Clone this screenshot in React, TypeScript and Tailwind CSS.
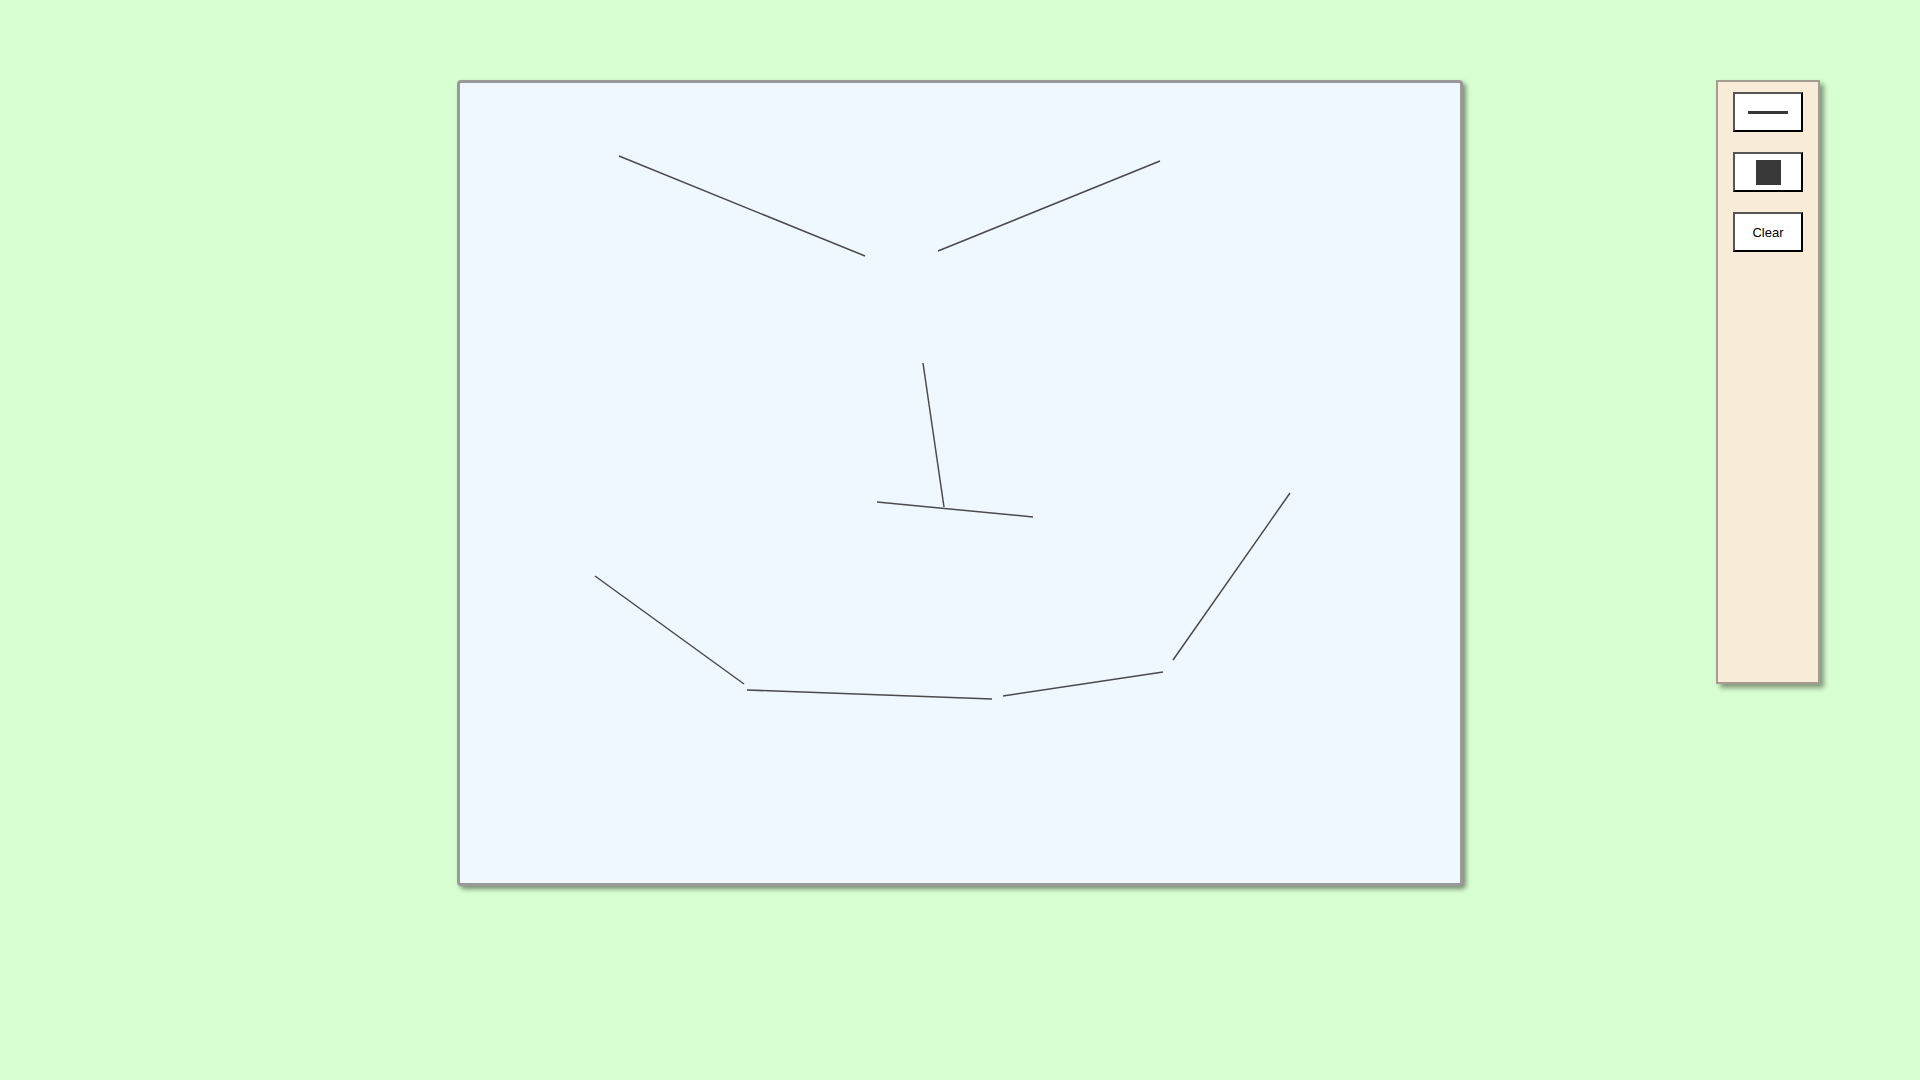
import { useState } from 'react';

type Seg = { x1: number; y1: number; x2: number; y2: number };

const initialSegments: Seg[] = [
  { x1: 159, y1: 73, x2: 405, y2: 173 },
  { x1: 478, y1: 168, x2: 700, y2: 78 },
  { x1: 463, y1: 280, x2: 484, y2: 424 },
  { x1: 417, y1: 419, x2: 573, y2: 434 },
  { x1: 135, y1: 493, x2: 284, y2: 601 },
  { x1: 287, y1: 607, x2: 532, y2: 616 },
  { x1: 543, y1: 613, x2: 703, y2: 589 },
  { x1: 713, y1: 577, x2: 830, y2: 410 },
];

const btn =
  'w-[70px] h-[40px] bg-white border-2 border-t-[#555] border-l-[#555] border-r-black border-b-black flex items-center justify-center';

export default function App() {
  const [segments, setSegments] = useState<Seg[]>(initialSegments);
  const [tool, setTool] = useState<'line' | 'rect'>('line');

  return (
    <div className="min-h-screen w-full bg-[#d8ffd1] font-['Liberation_Sans',Arial,sans-serif]">
      <div className="grid grid-cols-[1fr_auto_1fr] pt-[80px]">
        <div />

        {/* drawing surface */}
        <div className="w-[1006px] h-[806px] border-[3px] border-[#999] rounded-[4px] bg-[#f0f8ff] shadow-[3px_3px_5px_rgba(0,0,0,0.45)] overflow-hidden">
          <svg width={1000} height={800} className="block">
            {segments.map((s, i) => (
              <line
                key={i}
                x1={s.x1}
                y1={s.y1}
                x2={s.x2}
                y2={s.y2}
                stroke="#4a4a4a"
                strokeWidth={1.5}
              />
            ))}
          </svg>
        </div>

        {/* tools */}
        <div className="justify-self-end mr-[100px]">
          <div className="w-[104px] h-[604px] border-2 border-[#a59d90] bg-[#f8ebd8] shadow-[4px_4px_5px_rgba(0,0,0,0.4)] flex flex-col items-center pt-[10px] gap-[20px]">
            <button className={btn} onClick={() => setTool('line')} title={tool}>
              <span className="block w-[40px] h-[3px] bg-[#383838]" />
            </button>
            <button className={btn} onClick={() => setTool('rect')}>
              <span className="block w-[25px] h-[25px] bg-[#383838]" />
            </button>
            <button className={btn + ' text-[13px] text-black pt-[2px]'} onClick={() => setSegments([])}>
              Clear
            </button>
          </div>
        </div>
      </div>
    </div>
  );
}
